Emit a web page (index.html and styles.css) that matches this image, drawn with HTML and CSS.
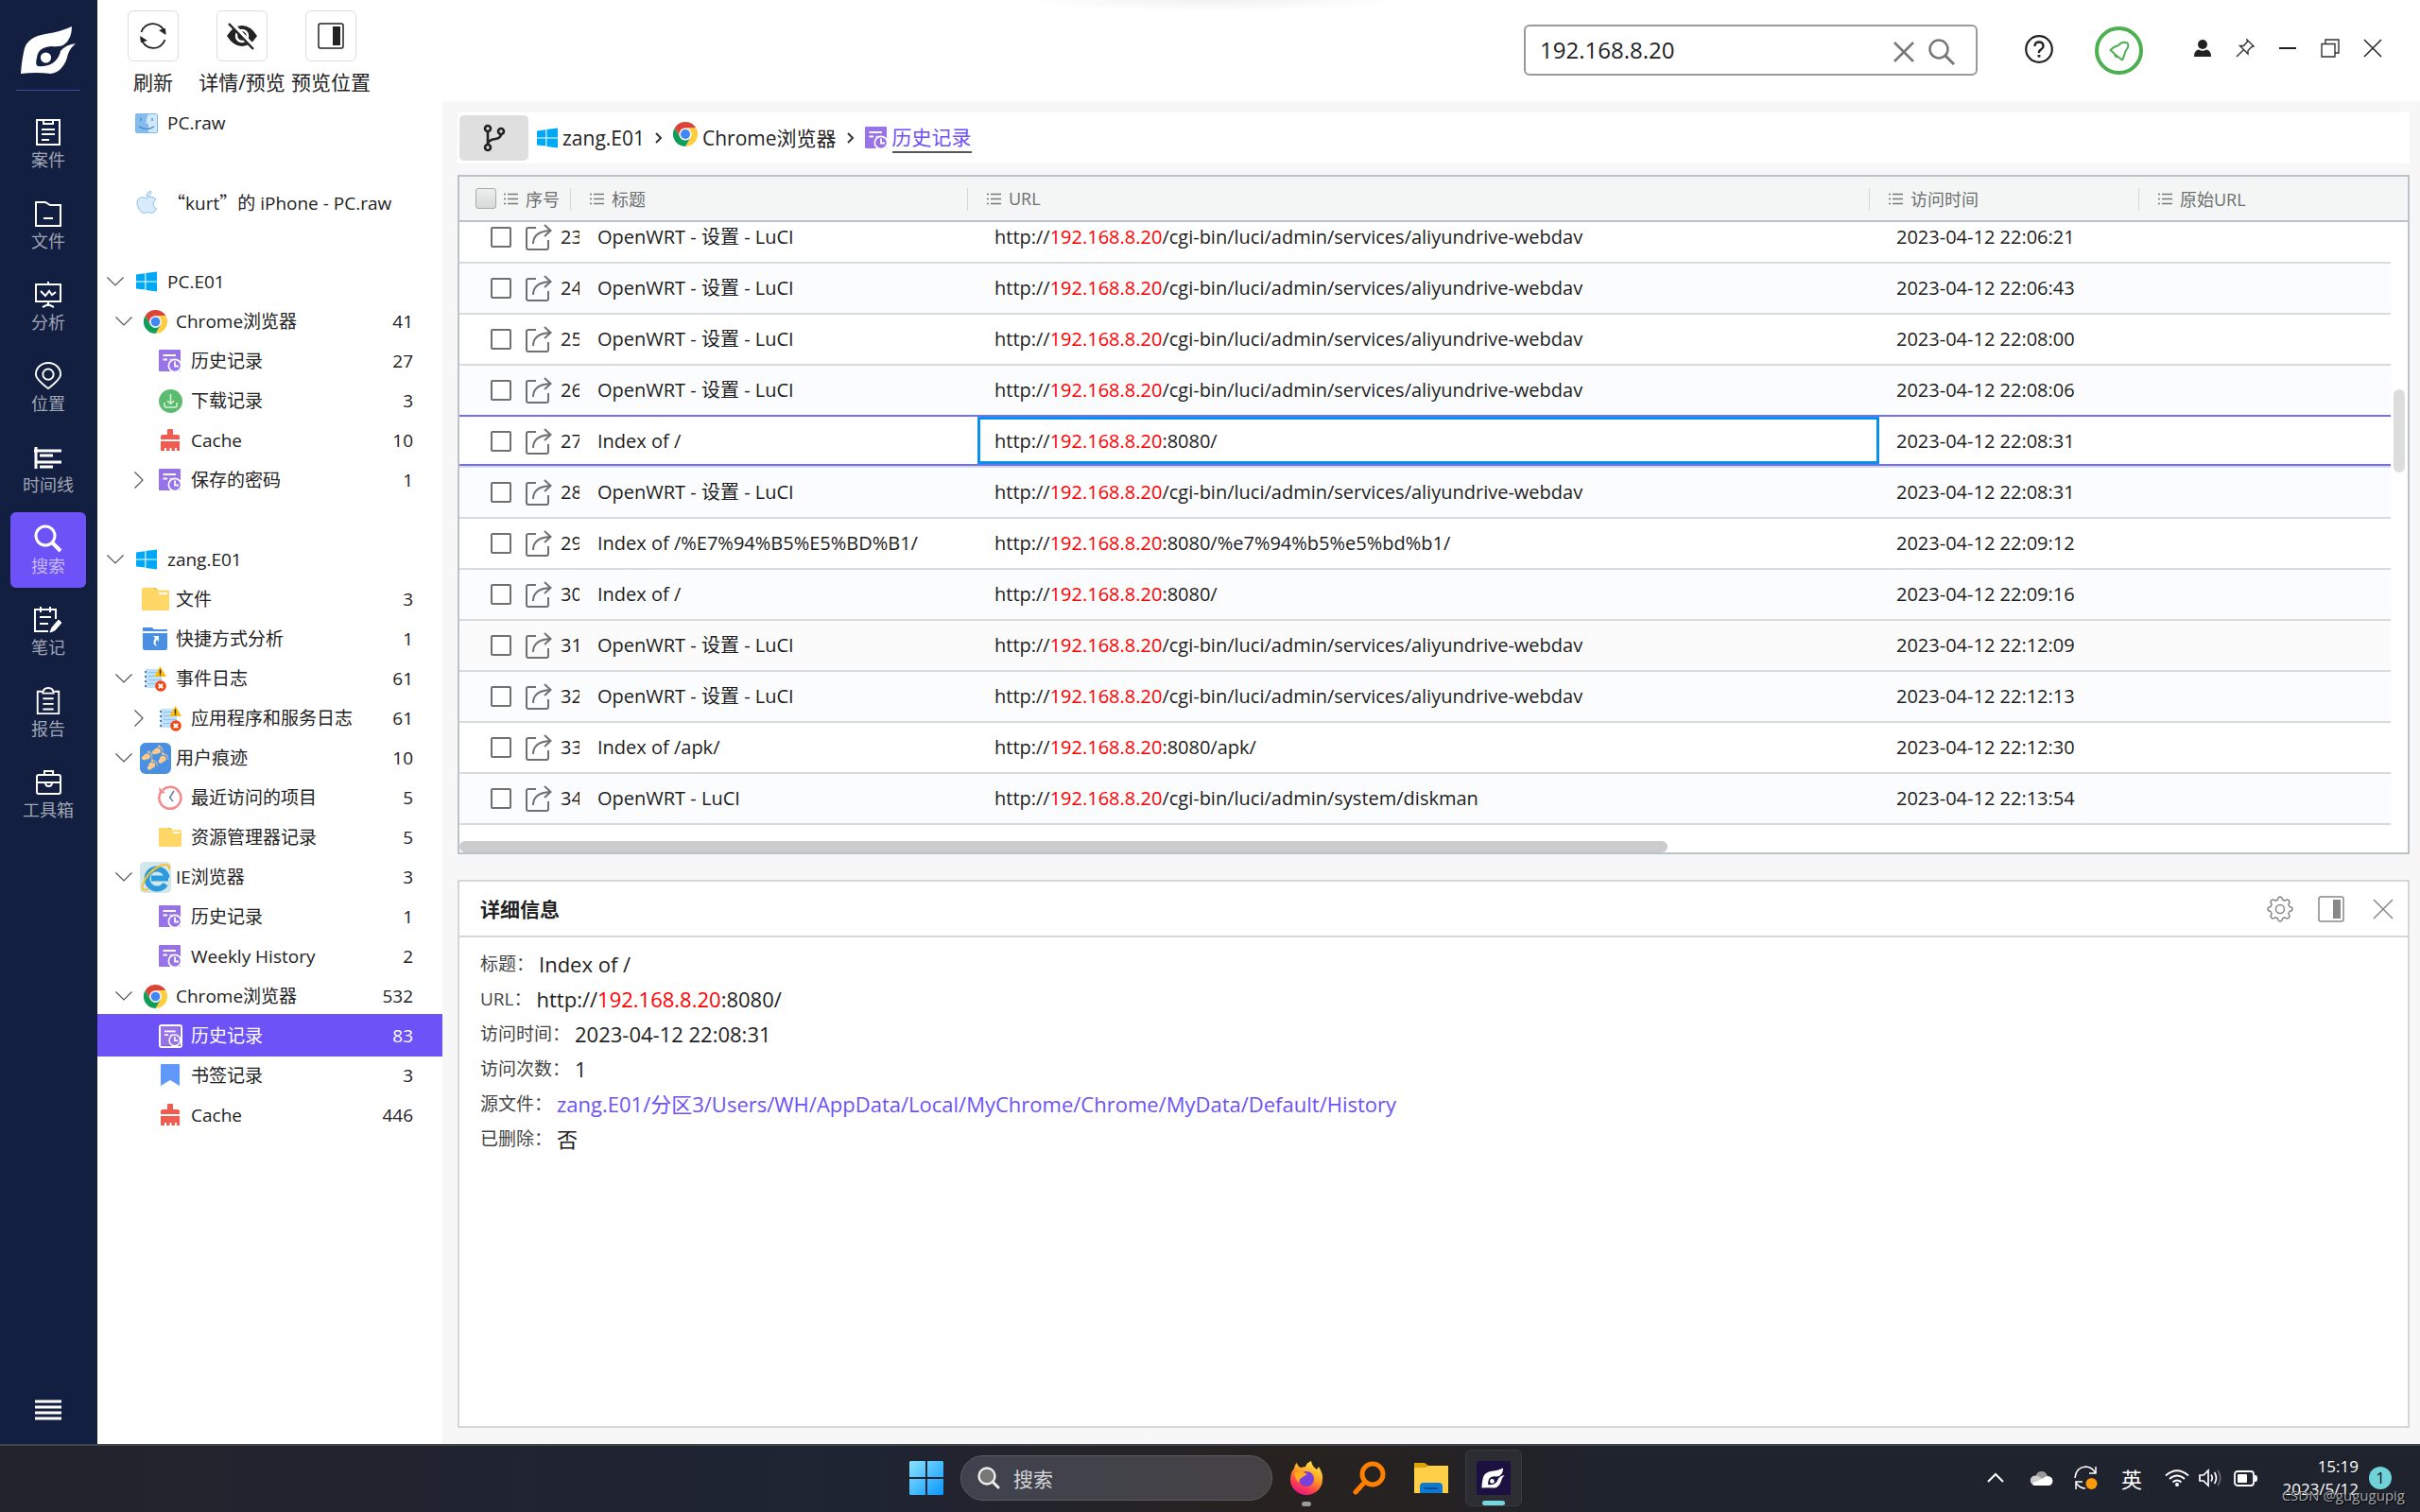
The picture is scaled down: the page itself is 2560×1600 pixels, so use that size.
FILE: index.html
```html
<!DOCTYPE html>
<html lang="zh-CN">
<head>
<meta charset="utf-8">
<title>搜索 - 历史记录</title>
<link rel="stylesheet" href="styles.css">
</head>
<body>
<svg class="sprite" aria-hidden="true">
  <symbol id="chrome" viewBox="0 0 48 48">
    <path fill="#db4437" d="M3.2 12A24 24 0 0 1 44.8 12H24A12 12 0 0 0 13.6 30Z"/>
    <path fill="#ffcd40" d="M24 12H44.8A24 24 0 0 1 24 48L34.4 30A12 12 0 0 0 24 12Z"/>
    <path fill="#0f9d58" d="M34.4 30L24 48A24 24 0 0 1 3.2 12L13.6 30A12 12 0 0 0 34.4 30Z"/>
    <circle cx="24" cy="24" r="11.5" fill="#f1f1f1"/><circle cx="24" cy="24" r="9.2" fill="#4285f4"/>
  </symbol>
  <symbol id="windows" viewBox="0 0 22 22">
    <path fill="#00a8f8" d="M0 3.6L9.3 2.2V10.4H0ZM10.4 2L22 .4V10.4H10.4ZM0 11.6H9.3V19.6L0 18.4ZM10.4 11.6H22V21.6L10.4 19.9Z"/>
  </symbol>
  <symbol id="history" viewBox="0 0 24 24">
    <rect width="23" height="23" rx="1" fill="#9873e8"/>
    <path stroke="#fff" stroke-width="2" fill="none" d="M4.500 6H18M4.500 10.500H9"/>
    <path stroke="#d9cbf7" stroke-width="1.500" fill="none" d="M11 10.500H15"/>
    <circle cx="17" cy="17" r="7.500" fill="#fff"/><circle cx="17" cy="17" r="5.800" fill="#9873e8"/>
    <path stroke="#fff" stroke-width="1.800" fill="none" d="M17 12.500V17.500H21"/>
  </symbol>
  <symbol id="cache" viewBox="0 0 20 24">
    <path fill="#f25b50" d="M7 1Q7 0 8 0H12Q13 0 13 1V6H18Q20 6 20 8V11H0V8Q0 6 2 6H7ZM0 13H20V23H17V20H15V23H11.500V20H9.500V23H6V20H4V23H0Z"/>
  </symbol>
  <symbol id="folder" viewBox="0 0 29 24">
    <path fill="#f9b750" d="M10 0H15L18 4H12Z"/><path fill="#ffd766" d="M0 1Q0 0 1 0H11L15 2.500H28Q29 2.500 29 3.500V23Q29 24 28 24H1Q0 24 0 23Z"/>
    <path fill="#fff" d="M18 5H27V7H18Z"/>
  </symbol>
  <symbol id="eventlog" viewBox="0 0 24 27">
    <rect x="2" y="3" width="17" height="20" fill="#bfe0fb"/>
    <path stroke="#8fc4ef" stroke-width="1" d="M5 6.500H19M5 10.500H19M5 14.500H19M5 18.500H19"/>
    <path stroke="#4c7aa5" stroke-width="2" stroke-dasharray="2 3" d="M2 5V23"/>
    <path fill="#fdbd10" d="M17.500 0L24 11H11Z"/><path fill="#222" d="M16.800 3.500H18.200V8H16.800ZM16.800 8.700H18.200V10H16.800Z"/>
    <circle cx="18" cy="21" r="5.800" fill="#f4430f"/><path stroke="#fff" stroke-width="2" d="M15.700 18.700L20.300 23.300M20.300 18.700L15.700 23.300"/>
  </symbol>
  <symbol id="foot" viewBox="0 0 12 15">
    <path fill="#fccb8a" d="M3 5Q7 3 8.500 6Q9.500 9 7.500 10.500Q7 14.500 4.500 15Q1.500 15 2 11Q0 7 3 5Z"/>
    <g fill="#fccb8a"><circle cx="2" cy="3" r="1.500"/><circle cx="4.800" cy="2" r="1"/><circle cx="7" cy="2.200" r=".9"/><circle cx="9" cy="3.200" r=".8"/><circle cx="10.400" cy="4.800" r=".7"/></g>
  </symbol>
  <symbol id="down" viewBox="0 0 18 10"><path fill="none" stroke="#555" stroke-width="1.200" d="M.5 .5L9 9L17.500 .5"/></symbol>
  <symbol id="right" viewBox="0 0 10 18"><path fill="none" stroke="#555" stroke-width="1.200" d="M.5 .5L9 9L.5 17.500"/></symbol>
  <symbol id="list" viewBox="0 0 15 13"><path fill="none" stroke="#777" stroke-width="1.500" d="M0 1.500H2M4 1.500H15M0 6.500H2M4 6.500H15M0 11.500H2M4 11.500H15"/></symbol>
  <symbol id="share" viewBox="0 0 28 28">
    <path fill="none" stroke="#707070" stroke-width="2" d="M11 4H3Q1 4 1 6V25Q1 27 3 27H22Q24 27 24 25V17M8 21Q8 8 26 7M20 1L26.500 7L20 13"/>
  </symbol>
  <symbol id="logo" viewBox="0 0 58 52">
    <path fill="#fff" d="M0 51Q1 36 4 24Q8 12 26 9Q44 6 54 1Q54 14 46 20Q42 23 32 22Q18 23 17 34Q15 42 18 43Q30 44 36 38Q41 33 42 27Q48 20 58 19Q50 26 49 34Q44 49 32 51Q16 49 0 51Z"/>
    <circle cx="26.500" cy="34" r="5.600" fill="#fff"/>
  </symbol>
  <symbol id="panel" viewBox="0 0 28 28">
    <rect x="1" y="1" width="26" height="26" rx="2" fill="none" stroke="currentColor" stroke-width="1.500"/><rect x="16" y="4" width="8" height="20" fill="currentColor"/>
  </symbol>
</svg>

<div class="app">
  <nav class="rail">
    <svg class="brand" width="58" height="52"><use href="#logo"/></svg>
    <div class="rail-list">
      <button class="rail-item"><svg width="30" height="30" viewBox="0 0 30 30"><path d="M3 2H27V28H3ZM10 2V6H20V2M8 12H22M8 17H22M8 23H16"/></svg>案件</button>
      <button class="rail-item"><svg width="30" height="30" viewBox="0 0 30 30"><path d="M2 3H12L17 6H28V28H2ZM10 20H20"/></svg>文件</button>
      <button class="rail-item"><svg width="30" height="30" viewBox="0 0 30 30"><path d="M2 4H28V22H2ZM15 1V4M15 22V27M9 28L15 25L21 28M7 11L12 16L16 11L19 15L23 12"/></svg>分析</button>
      <button class="rail-item"><svg width="30" height="32" viewBox="0 0 30 32"><path d="M15 30Q1 19 1 14A14 13 0 0 1 29 14Q29 19 15 30Z"/><circle cx="15" cy="14" r="6"/></svg>位置</button>
      <button class="rail-item"><svg width="30" height="30" viewBox="0 0 30 30"><path d="M2 4V27M0 8H29M6 13H20M2 20H29M6 25H20" stroke-width="3"/></svg>时间线</button>
      <button class="rail-item active"><svg width="30" height="30" viewBox="0 0 30 30"><circle cx="12" cy="12" r="10" stroke-width="3"/><path d="M19 19L28 28" stroke-width="4"/></svg>搜索</button>
      <button class="rail-item"><svg width="30" height="30" viewBox="0 0 30 30"><path d="M15 27H1V4H23V14M7 1V7M17 1V7M6 12H18M6 19H15"/><path d="M17 28L19 23L26 15L29 18L22 26Z" fill="#fff" stroke-width="1"/></svg>笔记</button>
      <button class="rail-item"><svg width="30" height="32" viewBox="0 0 30 32"><path d="M8 5H3V30H27V5H22M9 7Q9 1 15 1T21 7ZM9 13H21M9 19H21M9 25H21"/></svg>报告</button>
      <button class="rail-item"><svg width="30" height="30" viewBox="0 0 30 30"><rect x="3" y="7" width="25" height="20" rx="2"/><path d="M11 7V3H20V7M3 15H28M12 15Q12 19 15.500 19T19 15"/></svg>工具箱</button>
    </div>
    <button class="rail-menu" aria-label="菜单"><svg width="28" height="22" viewBox="0 0 28 22"><path d="M0 2H28M0 8H28M0 14H28M0 20H28" stroke-width="3"/></svg></button>
  </nav>

  <div class="workspace">
    <header class="topbar">
      <div class="tools">
        <button class="tool"><span class="tool-box"><svg width="30" height="30" viewBox="0 0 30 30"><path fill="none" stroke="#222" stroke-width="1.800" d="M2.500 11A13 13 0 0 1 27.500 12M27.500 19A13 13 0 0 1 2.500 18"/><path fill="#222" d="M21 9L28.500 14L28 7ZM9 20L1 15L2 22Z"/></svg></span>刷新</button>
        <button class="tool wide"><span class="tool-box"><svg width="34" height="30" viewBox="0 0 34 30"><path fill="#222" d="M1 15Q8 4 17 4T33 15Q26 26 17 26T1 15Z"/><circle cx="17" cy="15" r="6" fill="none" stroke="#fff" stroke-width="2.500"/><path stroke="#fff" stroke-width="5" d="M5 1L31 29"/><path stroke="#222" stroke-width="2.500" d="M3 2L29 29"/></svg></span>详情/预览</button>
        <button class="tool"><span class="tool-box"><svg class="dark" width="28" height="28"><use href="#panel"/></svg></span>预览位置</button>
      </div>
      <form class="search">
        <input type="text" value="192.168.8.20" aria-label="搜索">
        <button type="button" aria-label="清除"><svg width="24" height="24" viewBox="0 0 24 24"><path d="M2 2L22 22M22 2L2 22" stroke="#777" stroke-width="2.500"/></svg></button>
        <button type="button" aria-label="查找"><svg width="28" height="28" viewBox="0 0 28 28"><circle cx="11" cy="11" r="9.500" fill="none" stroke="#777" stroke-width="2.500"/><path d="M18 18L27 27" stroke="#777" stroke-width="3"/></svg></button>
      </form>
      <button class="help" aria-label="帮助"><svg width="30" height="30" viewBox="0 0 30 30"><circle cx="15" cy="15" r="13.800" fill="none" stroke="#222" stroke-width="2.200"/><path fill="none" stroke="#222" stroke-width="2.400" d="M10.500 12Q10.500 7.500 15 7.500T19.500 12Q19.500 14 17 15.500T15 19"/><path fill="#222" d="M13.600 21H16.400V23.600H13.600Z"/></svg></button>
      <button class="notice" aria-label="通知"><svg width="22" height="22" viewBox="0 0 22 22"><path fill="none" stroke="#4caf50" stroke-width="2" stroke-linejoin="round" d="M1.500 10L5 7L10 5Q13 1 18 2Q21 2 20 7Q17 11 16 16L14 20.500L8 16Z"/><path fill="#4caf50" d="M5 14L10 17Q6 20 5 14Z"/></svg></button>
      <div class="window-controls">
        <button aria-label="用户"><svg width="20" height="20" viewBox="0 0 20 20"><circle cx="10" cy="6" r="5" fill="#222"/><path fill="#222" d="M1 19Q1 12 6 11.500Q10 14 14 11.500Q19 12 19 19Z"/></svg></button>
        <button aria-label="置顶"><svg width="20" height="20" viewBox="0 0 20 20"><path fill="none" stroke="#333" stroke-width="1.400" d="M12 1L19 8L17 8.500L13 12.500V16L4.500 7.500H8.500L12.500 3ZM8 12L1 19"/></svg></button>
        <button aria-label="最小化"><svg width="20" height="20" viewBox="0 0 20 20"><path stroke="#222" stroke-width="2" d="M1 10H19"/></svg></button>
        <button aria-label="还原"><svg width="20" height="20" viewBox="0 0 20 20"><path fill="none" stroke="#333" stroke-width="1.400" d="M1 5.500H15V19H1ZM5 5V1H19V15H15"/></svg></button>
        <button aria-label="关闭"><svg width="20" height="20" viewBox="0 0 20 20"><path stroke="#222" stroke-width="1.500" d="M1 1L19 19M19 1L1 19"/></svg></button>
      </div>
    </header>

    <div class="content">
      <aside class="tree">
        <div class="node l0"><i class="tw"></i><i class="ic"><svg width="24" height="21" viewBox="0 0 24 21"><rect x=".5" y=".5" width="23" height="20" rx="1" fill="#cfe8fc" stroke="#7db8ea"/><path fill="#85bcee" d="M1 1H14Q11 6 12 11H14V20H1Z"/><path fill="none" stroke="#3f83c4" stroke-width="1.200" d="M6 5V8M18 5V8M4 14Q12 19 20 14"/></svg></i><span>PC.raw</span></div>
        <div class="node"></div>
        <div class="node l0"><i class="tw"></i><i class="ic"><svg width="22" height="24" viewBox="0 0 22 24"><path fill="#d8ecfd" stroke="#93c0ea" d="M11 8Q14 5.500 17 6.500Q20 7 21 9Q17 12 18 15Q19 18 21.500 18.500Q19 24 16 23.500Q13 21.500 9 23.500Q6 24 3.500 20Q-.5 14 1.500 9.500Q5 5 11 8ZM11 6Q11 1 16 .5Q16 5 11 6Z"/></svg></i><span><span class="full">“</span>kurt<span class="full">”</span>的 iPhone - PC.raw</span></div>
        <div class="node"></div>
        <div class="node l0"><i class="tw"><svg width="18" height="10"><use href="#down"/></svg></i><i class="ic"><svg width="22" height="22"><use href="#windows"/></svg></i><span>PC.E01</span></div>
        <div class="node l1"><i class="tw"><svg width="18" height="10"><use href="#down"/></svg></i><i class="ic"><svg width="25" height="25"><use href="#chrome"/></svg></i><span>Chrome浏览器</span><b>41</b></div>
        <div class="node l2"><i class="tw"></i><i class="ic"><svg width="24" height="24"><use href="#history"/></svg></i><span>历史记录</span><b>27</b></div>
        <div class="node l2"><i class="tw"></i><i class="ic"><svg width="25" height="25" viewBox="0 0 25 25"><circle cx="12.500" cy="12.500" r="12.500" fill="#5dbb70"/><path fill="none" stroke="#d8f2dc" stroke-width="1.500" d="M12.500 5V15M9 12L12.500 15.500L16 12M6 14V17Q6 19 8 19H17Q19 19 19 17V14"/></svg></i><span>下载记录</span><b>3</b></div>
        <div class="node l2"><i class="tw"></i><i class="ic"><svg width="20" height="24"><use href="#cache"/></svg></i><span>Cache</span><b>10</b></div>
        <div class="node l2"><i class="tw"><svg width="10" height="18"><use href="#right"/></svg></i><i class="ic"><svg width="24" height="24"><use href="#history"/></svg></i><span>保存的密码</span><b>1</b></div>
        <div class="node"></div>
        <div class="node l0"><i class="tw"><svg width="18" height="10"><use href="#down"/></svg></i><i class="ic"><svg width="22" height="22"><use href="#windows"/></svg></i><span>zang.E01</span></div>
        <div class="node l1"><i class="tw"></i><i class="ic"><svg width="29" height="24"><use href="#folder"/></svg></i><span>文件</span><b>3</b></div>
        <div class="node l1"><i class="tw"></i><i class="ic"><svg width="26" height="24" viewBox="0 0 26 24"><path fill="#4a90e2" d="M0 0H10L12 2H26V4H0ZM0 6H26V22Q26 24 24 24H2Q0 24 0 22Z"/><path fill="#fff" d="M11 9H17V15L15 13Q12 16 15 20Q9 18 13 11Z"/></svg></i><span>快捷方式分析</span><b>1</b></div>
        <div class="node l1"><i class="tw"><svg width="18" height="10"><use href="#down"/></svg></i><i class="ic"><svg width="24" height="27"><use href="#eventlog"/></svg></i><span>事件日志</span><b>61</b></div>
        <div class="node l2"><i class="tw"><svg width="10" height="18"><use href="#right"/></svg></i><i class="ic"><svg width="24" height="27"><use href="#eventlog"/></svg></i><span>应用程序和服务日志</span><b>61</b></div>
        <div class="node l1"><i class="tw"><svg width="18" height="10"><use href="#down"/></svg></i><i class="ic"><svg width="33" height="33" viewBox="0 0 33 33"><rect width="33" height="33" rx="6" fill="#4a90e2"/><g transform="translate(9 15) rotate(55)"><use href="#foot" x="-6" y="-6" width="11" height="13"/></g><g transform="translate(20 9) rotate(55)"><use href="#foot" x="-6" y="-6" width="11" height="13"/></g><g transform="translate(24 18) rotate(35)"><use href="#foot" x="-5" y="-8" width="11" height="13"/></g><g transform="translate(13 24) rotate(35)"><use href="#foot" x="-5" y="-7" width="11" height="13"/></g></svg></i><span>用户痕迹</span><b>10</b></div>
        <div class="node l2"><i class="tw"></i><i class="ic"><svg width="26" height="26" viewBox="0 0 26 26"><path fill="none" stroke="#f28b8b" stroke-width="2.600" d="M4 6A11.500 11.500 0 1 0 13 1.800Q9 1.800 5 5"/><path fill="#f28b8b" d="M1 2L2 9L8 8Z"/><path fill="none" stroke="#5b7a99" stroke-width="1.400" d="M17 6L12.500 13L16 17"/></svg></i><span>最近访问的项目</span><b>5</b></div>
        <div class="node l2"><i class="tw"></i><i class="ic"><svg width="24" height="20"><use href="#folder"/></svg></i><span>资源管理器记录</span><b>5</b></div>
        <div class="node l1"><i class="tw"><svg width="18" height="10"><use href="#down"/></svg></i><i class="ic"><svg width="33" height="33" viewBox="0 0 33 33"><rect width="33" height="33" rx="5" fill="#d3e6e8"/><path fill="none" stroke="#2b9be0" stroke-width="6" d="M30 17.500H12M28.500 17A10.500 10.500 0 1 0 27 23.500"/><path fill="none" stroke="#f7c331" stroke-width="2" d="M31 8Q32 1 22 4Q8 10 3 24Q1 32 9 29"/></svg></i><span>IE浏览器</span><b>3</b></div>
        <div class="node l2"><i class="tw"></i><i class="ic"><svg width="24" height="24"><use href="#history"/></svg></i><span>历史记录</span><b>1</b></div>
        <div class="node l2"><i class="tw"></i><i class="ic"><svg width="24" height="24"><use href="#history"/></svg></i><span>Weekly History</span><b>2</b></div>
        <div class="node l1"><i class="tw"><svg width="18" height="10"><use href="#down"/></svg></i><i class="ic"><svg width="25" height="25"><use href="#chrome"/></svg></i><span>Chrome浏览器</span><b>532</b></div>
        <div class="node l2 selected"><i class="tw"></i><i class="ic"><svg class="framed" width="25" height="25"><use href="#history"/></svg></i><span>历史记录</span><b>83</b></div>
        <div class="node l2"><i class="tw"></i><i class="ic"><svg width="20" height="24" viewBox="0 0 20 24"><path fill="#6198fb" d="M0 1Q0 0 1 0H19Q20 0 20 1V23L10 17L0 23Z"/></svg></i><span>书签记录</span><b>3</b></div>
        <div class="node l2"><i class="tw"></i><i class="ic"><svg width="20" height="24"><use href="#cache"/></svg></i><span>Cache</span><b>446</b></div>
      </aside>

      <main class="main">
        <div class="crumbs">
          <button class="branch" aria-label="路径"><svg width="26" height="30" viewBox="0 0 26 30"><g fill="none" stroke="#222" stroke-width="2.600"><circle cx="6" cy="5" r="3"/><circle cx="6" cy="25" r="3"/><circle cx="20" cy="8" r="3"/><path d="M6 8V22M20 11Q20 15 14 16Q7 17 6 21"/></g></svg></button>
          <a href="#"><svg width="22" height="22"><use href="#windows"/></svg>zang.E01</a>
          <svg class="sep" width="8" height="12" viewBox="0 0 8 12"><path d="M1 1L6 6L1 11"/></svg>
          <a href="#"><svg class="lift" width="26" height="26"><use href="#chrome"/></svg>Chrome浏览器</a>
          <svg class="sep" width="8" height="12" viewBox="0 0 8 12"><path d="M1 1L6 6L1 11"/></svg>
          <a href="#" class="current"><svg width="24" height="24"><use href="#history"/></svg><span>历史记录</span></a>
        </div>

        <div class="grid">
          <table>
            <colgroup><col class="c-no"><col class="c-title"><col class="c-url"><col class="c-time"><col></colgroup>
            <thead><tr>
              <th><div class="head"><input type="checkbox" aria-label="全选"><svg width="15" height="13"><use href="#list"/></svg>序号</div></th>
              <th><div class="head"><svg width="15" height="13"><use href="#list"/></svg>标题</div></th>
              <th><div class="head"><svg width="15" height="13"><use href="#list"/></svg>URL</div></th>
              <th><div class="head"><svg width="15" height="13"><use href="#list"/></svg>访问时间</div></th>
              <th><div class="head"><svg width="15" height="13"><use href="#list"/></svg>原始URL</div></th>
            </tr></thead>
            <tbody>
              <tr class="partial"><td><div class="num"><input type="checkbox" aria-label="选择 23"><svg width="28" height="28"><use href="#share"/></svg><span>23</span></div></td><td>OpenWRT - 设置 - LuCI</td><td>http://<mark>192.168.8.20</mark>/cgi-bin/luci/admin/services/aliyundrive-webdav</td><td>2023-04-12 22:06:21</td><td></td></tr>
              <tr><td><div class="num"><input type="checkbox" aria-label="选择 24"><svg width="28" height="28"><use href="#share"/></svg><span>24</span></div></td><td>OpenWRT - 设置 - LuCI</td><td>http://<mark>192.168.8.20</mark>/cgi-bin/luci/admin/services/aliyundrive-webdav</td><td>2023-04-12 22:06:43</td><td></td></tr>
              <tr><td><div class="num"><input type="checkbox" aria-label="选择 25"><svg width="28" height="28"><use href="#share"/></svg><span>25</span></div></td><td>OpenWRT - 设置 - LuCI</td><td>http://<mark>192.168.8.20</mark>/cgi-bin/luci/admin/services/aliyundrive-webdav</td><td>2023-04-12 22:08:00</td><td></td></tr>
              <tr class="before"><td><div class="num"><input type="checkbox" aria-label="选择 26"><svg width="28" height="28"><use href="#share"/></svg><span>26</span></div></td><td>OpenWRT - 设置 - LuCI</td><td>http://<mark>192.168.8.20</mark>/cgi-bin/luci/admin/services/aliyundrive-webdav</td><td>2023-04-12 22:08:06</td><td></td></tr>
              <tr class="picked"><td><div class="num"><input type="checkbox" aria-label="选择 27"><svg width="28" height="28"><use href="#share"/></svg><span>27</span></div></td><td>Index of /</td><td class="focus"><div>http://<mark>192.168.8.20</mark>:8080/</div></td><td>2023-04-12 22:08:31</td><td></td></tr>
              <tr><td><div class="num"><input type="checkbox" aria-label="选择 28"><svg width="28" height="28"><use href="#share"/></svg><span>28</span></div></td><td>OpenWRT - 设置 - LuCI</td><td>http://<mark>192.168.8.20</mark>/cgi-bin/luci/admin/services/aliyundrive-webdav</td><td>2023-04-12 22:08:31</td><td></td></tr>
              <tr><td><div class="num"><input type="checkbox" aria-label="选择 29"><svg width="28" height="28"><use href="#share"/></svg><span>29</span></div></td><td>Index of /%E7%94%B5%E5%BD%B1/</td><td>http://<mark>192.168.8.20</mark>:8080/%e7%94%b5%e5%bd%b1/</td><td>2023-04-12 22:09:12</td><td></td></tr>
              <tr><td><div class="num"><input type="checkbox" aria-label="选择 30"><svg width="28" height="28"><use href="#share"/></svg><span>30</span></div></td><td>Index of /</td><td>http://<mark>192.168.8.20</mark>:8080/</td><td>2023-04-12 22:09:16</td><td></td></tr>
              <tr class="hover"><td><div class="num"><input type="checkbox" aria-label="选择 31"><svg width="28" height="28"><use href="#share"/></svg><span>31</span></div></td><td>OpenWRT - 设置 - LuCI</td><td>http://<mark>192.168.8.20</mark>/cgi-bin/luci/admin/services/aliyundrive-webdav</td><td>2023-04-12 22:12:09</td><td></td></tr>
              <tr><td><div class="num"><input type="checkbox" aria-label="选择 32"><svg width="28" height="28"><use href="#share"/></svg><span>32</span></div></td><td>OpenWRT - 设置 - LuCI</td><td>http://<mark>192.168.8.20</mark>/cgi-bin/luci/admin/services/aliyundrive-webdav</td><td>2023-04-12 22:12:13</td><td></td></tr>
              <tr><td><div class="num"><input type="checkbox" aria-label="选择 33"><svg width="28" height="28"><use href="#share"/></svg><span>33</span></div></td><td>Index of /apk/</td><td>http://<mark>192.168.8.20</mark>:8080/apk/</td><td>2023-04-12 22:12:30</td><td></td></tr>
              <tr><td><div class="num"><input type="checkbox" aria-label="选择 34"><svg width="28" height="28"><use href="#share"/></svg><span>34</span></div></td><td>OpenWRT - LuCI</td><td>http://<mark>192.168.8.20</mark>/cgi-bin/luci/admin/system/diskman</td><td>2023-04-12 22:13:54</td><td></td></tr>
            </tbody>
          </table>
          <div class="scroll-h"></div>
          <div class="scroll-v"></div>
        </div>

        <section class="detail">
          <header class="detail-head">
            <h2>详细信息</h2>
            <button aria-label="设置"><svg width="28" height="28" viewBox="0 0 28 28"><path fill="none" stroke="#888" stroke-width="1.500" stroke-linejoin="round" d="M11.500 4Q12 1 14 1T16.500 4L19 5.200Q21.500 3 23.200 4.800T22.800 9L24 11.500Q27 12 27 14T24 16.500L22.800 19Q25 21.500 23.200 23.200T19 22.800L16.500 24Q16 27 14 27T11.500 24L9 22.800Q6.500 25 4.800 23.200T5.200 19L4 16.500Q1 16 1 14T4 11.500L5.200 9Q3 6.500 4.800 4.800T9 5.200Z"/><circle cx="14" cy="14" r="4.500" fill="none" stroke="#888" stroke-width="1.500"/></svg></button>
            <button aria-label="预览位置"><svg width="28" height="28"><use href="#panel"/></svg></button>
            <button aria-label="关闭"><svg width="22" height="22" viewBox="0 0 22 22"><path stroke="#888" stroke-width="1.500" d="M1 1L21 21M21 1L1 21"/></svg></button>
          </header>
          <dl>
            <div><dt>标题：</dt><dd>Index of /</dd></div>
            <div><dt>URL：</dt><dd>http://<mark>192.168.8.20</mark>:8080/</dd></div>
            <div><dt>访问时间：</dt><dd>2023-04-12 22:08:31</dd></div>
            <div><dt>访问次数：</dt><dd>1</dd></div>
            <div><dt>源文件：</dt><dd><a href="#">zang.E01/分区3/Users/WH/AppData/Local/MyChrome/Chrome/MyData/Default/History</a></dd></div>
            <div><dt>已删除：</dt><dd>否</dd></div>
          </dl>
        </section>
      </main>
    </div>
  </div>
</div>

<footer class="taskbar">
  <div class="apps">
    <button class="app-btn" aria-label="开始"><svg width="36" height="36" viewBox="0 0 36 36"><defs><linearGradient id="win" x1="0" y1="0" x2="1" y2="1"><stop offset="0" stop-color="#8be4ff"/><stop offset="1" stop-color="#0a96ff"/></linearGradient></defs><path fill="url(#win)" d="M1 0H17V17H0V1ZM19 0H35L36 1V17H19ZM0 19H17V36H1L0 35ZM19 19H36V35L35 36H19Z"/></svg></button>
    <button class="task-search"><svg width="24" height="24" viewBox="0 0 24 24"><circle cx="10" cy="10" r="8.500" fill="#777" stroke="#eee" stroke-width="2.400"/><path stroke="#eee" stroke-width="3" stroke-linecap="round" d="M16.500 16.500L22 22"/></svg>搜索</button>
    <button class="app-btn running" aria-label="Firefox"><svg width="36" height="36" viewBox="0 0 36 36"><defs><linearGradient id="fox" x1=".8" y1="0" x2=".3" y2="1"><stop offset="0" stop-color="#fff44f"/><stop offset=".45" stop-color="#ff9a1f"/><stop offset=".75" stop-color="#ff3f4e"/><stop offset="1" stop-color="#e31587"/></linearGradient></defs><path fill="url(#fox)" d="M5 8Q6 3 8 2Q9 6 12 7L17 6Q18 2 23 0Q24 6 29 9L31 6Q36 14 35 20A17 16 0 0 1 1 20Q1 12 5 8Z"/><circle cx="18" cy="19" r="8" fill="#7b3fe0"/><path fill="#ffad20" d="M5 13Q12 9 19 14L14 17Q10 19 10 23Q6 19 5 13Z"/></svg></button>
    <button class="app-btn" aria-label="Everything"><svg width="36" height="36" viewBox="0 0 36 36"><circle cx="22" cy="14" r="11" fill="none" stroke="#ff7f00" stroke-width="5"/><path stroke="#ff7f00" stroke-width="5" stroke-linecap="round" d="M13 23L4 33"/></svg></button>
    <button class="app-btn" aria-label="文件资源管理器"><svg width="36" height="34" viewBox="0 0 36 34"><path fill="#e0a108" d="M0 1H11L15 4V8H0Z"/><path fill="#ffcf48" d="M0 6H12L15 4H36V33H0Z"/><path fill="#0f78d0" d="M6 33V26Q6 22 10 22H26Q30 22 30 26V33Z"/><path stroke="#0a4f96" stroke-width="2" d="M11 28H25"/></svg></button>
    <button class="app-btn current" aria-label="取证分析"><svg width="36" height="36" viewBox="0 0 36 36"><rect width="36" height="36" rx="2" fill="#1b1040"/><svg x="5" y="7" width="25" height="22" viewBox="0 0 58 52"><use href="#logo"/></svg></svg></button>
  </div>
  <div class="tray">
    <button aria-label="显示隐藏的图标"><svg width="18" height="12" viewBox="0 0 18 12"><path fill="none" stroke="#fff" stroke-width="2" d="M1 10L9 2L17 10"/></svg></button>
    <button aria-label="OneDrive"><svg width="25" height="17" viewBox="0 0 25 17"><path fill="#999" d="M6 7Q8 0 13 1Q17 1 19 6L12 12Z"/><path fill="#ccc" d="M5 16Q0 14 1 9Q3 4 9 6L20 13Z"/><path fill="#fff" d="M5 16Q2 15 4 13L13 9L18 6Q24 6 24.500 11Q24 16 20 16Z"/></svg></button>
    <button aria-label="更新"><svg width="26" height="26" viewBox="0 0 26 26"><path fill="none" stroke="#fff" stroke-width="1.500" d="M1 13Q2 2 12 1Q19 1 23 8M23 1V8H16M12 24Q6 24 2 18M2 25V17H9"/><circle cx="18.500" cy="19" r="6" fill="#ff9a08"/></svg></button>
    <button class="ime">英</button>
    <button class="sys" aria-label="网络"><svg width="26" height="18" viewBox="0 0 26 18"><path fill="none" stroke="#fff" stroke-width="1.800" d="M1 6.500Q13 -4 25 6.500M5 10Q13 3 21 10M8.500 13.500Q13 9.500 17.500 13.500"/><circle cx="13" cy="16" r="2" fill="#fff"/></svg></button>
    <button class="sys" aria-label="音量"><svg width="26" height="20" viewBox="0 0 26 20"><path fill="none" stroke="#fff" stroke-width="1.700" d="M1 7H5L10 2V18L5 13H1ZM13 6.500Q15.500 10 13 13.500M16.500 4Q20.500 10 16.500 16"/><path fill="none" stroke="#666b75" stroke-width="1.700" d="M20 2Q25.500 10 20 18"/></svg></button>
    <button class="sys" aria-label="电池"><svg width="25" height="17" viewBox="0 0 25 17"><rect x="1" y="1" width="20" height="15" rx="3" fill="none" stroke="#fff" stroke-width="1.800"/><rect x="4" y="4" width="10" height="9" rx="1" fill="#fff"/><path fill="#fff" d="M22 5H23Q25 5 25 8.500T23 12H22Z"/></svg></button>
    <div class="clock"><time>15:19</time><time>2023/5/12</time></div>
    <span class="badge">1</span>
  </div>
  <span class="watermark">CSDN @gugugupig</span>
</footer>
</body>
</html>
```
FILE: styles.css
```css
* { box-sizing: border-box; }

body {
  margin: 0;
  height: 100vh;
  display: flex;
  flex-direction: column;
  overflow: hidden;
  background: #fff;
  color: #222;
  font-family: "Open Sans", "Noto Sans CJK SC", sans-serif;
  font-size: 20px;
}

button {
  margin: 0;
  padding: 0;
  border: 0;
  background: none;
  color: inherit;
  font: inherit;
}

svg { display: block; flex: none; }
a { color: inherit; text-decoration: none; }
mark { background: none; color: #f00; }
.sprite { position: absolute; width: 0; height: 0; }

.app {
  flex: 1;
  min-height: 0;
  display: flex;
}

/* navigation rail */
.rail {
  width: 103px;
  flex: none;
  display: flex;
  flex-direction: column;
  align-items: center;
  padding: 27px 1px 25px 0;
  background: #121f41;
}

.rail svg { fill: none; stroke: #fff; stroke-width: 2; }
.rail .brand { stroke: none; }

.rail-list {
  width: 68px;
  margin-top: 16px;
  padding-top: 16px;
  border-top: 1px solid #45499a;
  display: flex;
  flex-direction: column;
  align-items: center;
  gap: 6px;
}

.rail-item {
  width: 80px;
  height: 80px;
  padding-top: 13px;
  display: flex;
  flex-direction: column;
  align-items: center;
  gap: 1px;
  border-radius: 6px;
  color: #a0a5b3;
  font-size: 18px;
  line-height: 26px;
}

.rail-item svg { height: 30px; }
.rail-item.active { background: #6c52f7; color: #c4b9fc; }
.rail-menu { margin-top: auto; }

/* top bar */
.workspace {
  flex: 1;
  min-width: 0;
  display: flex;
  flex-direction: column;
}

.topbar {
  height: 107px;
  flex: none;
  display: flex;
  align-items: flex-start;
  padding-right: 28px;
  background: radial-gradient(ellipse 200px 12px at 48% 0, #f1f1f1, #fff);
}

.tools { display: flex; padding: 11px 0 0 17px; }

.tool {
  width: 84px;
  display: flex;
  flex-direction: column;
  align-items: center;
  gap: 7px;
  font-size: 21px;
  line-height: 30px;
  white-space: nowrap;
}

.tool.wide { width: 104px; }

.tool-box {
  width: 54px;
  height: 54px;
  display: grid;
  place-items: center;
  border: 1px solid #ddd;
  border-radius: 6px;
}

.dark { color: #222; }

.search {
  width: 480px;
  height: 54px;
  margin: 26px 0 0 auto;
  padding: 4px 22px 0 15px;
  display: flex;
  align-items: center;
  gap: 14px;
  border: 2px solid #999;
  border-radius: 6px;
}

.search input {
  flex: 1;
  min-width: 0;
  padding: 0 0 6px;
  border: 0;
  outline: 0;
  color: #222;
  font: inherit;
  font-size: 24px;
}

.help { margin: 37px 44px 0 50px; }

.notice {
  width: 51px;
  height: 51px;
  margin: 28px 40px 0 0;
  display: grid;
  place-items: center;
  border: 4px solid #4caf50;
  border-radius: 50%;
}

.window-controls { display: flex; margin-top: 41px; }
.window-controls button { width: 45px; display: grid; place-items: center; }

/* evidence tree */
.content {
  flex: 1;
  min-height: 0;
  display: flex;
}

.tree { width: 365px; flex: none; padding-top: 2px; }

.node {
  height: 42px;
  display: flex;
  align-items: center;
  padding-right: 31px;
  font-size: 19px;
  line-height: 28px;
  white-space: nowrap;
}

.node i { display: grid; place-items: center; flex: none; }
.tw { width: 20px; }
.ic { width: 34px; margin: 0 5px 0 6px; }
.node span { flex: 1; }
.node b { font-weight: 400; }
.node span .full { font-family: "Noto Sans CJK SC", sans-serif; }
.l0 { padding-left: 9px; }
.l1 { padding-left: 18px; }
.l2 { padding-left: 34px; }
.selected { background: #6c52f7; box-shadow: 0 -2px #6c52f7, 0 1px #6c52f7; color: #fff; }
.framed { border: 2px solid #fff; border-radius: 3px; }

/* main area */
.main {
  flex: 1;
  min-width: 0;
  display: flex;
  flex-direction: column;
  padding: 12px 11px 17px 16px;
  background: #f7f7f7;
}

.crumbs {
  height: 54px;
  flex: none;
  margin-bottom: 12px;
  padding-left: 2px;
  display: flex;
  align-items: center;
  background: #fff;
  font-size: 21px;
  line-height: 30px;
}

.crumbs a { display: flex; align-items: center; gap: 5px; }

.branch {
  width: 73px;
  height: 48px;
  margin-right: 9px;
  display: grid;
  place-items: center;
  border-radius: 5px;
  background: #dfdfdf;
}

.sep { margin: 0 11px; fill: none; stroke: #333; stroke-width: 2; }
.lift { margin-bottom: 8px; }
.current { color: #6c52f7; }
.current span { border-bottom: 2px solid #555; }

.grid {
  flex: none;
  position: relative;
  border: 2px solid #bcc3c6;
  background: linear-gradient(#f4f6f5 46px, #bcc3c6 46px, #bcc3c6 48px, #fff 48px);
}

table {
  width: calc(100% - 18px);
  table-layout: fixed;
  border-collapse: separate;
  border-spacing: 0;
}

.c-no { width: 128px; }
.c-title { width: 420px; }
.c-url { width: 954px; }
.c-time { width: 285px; }

th {
  position: relative;
  height: 48px;
  padding: 0 0 2px 10px;
  color: #6b6f70;
  font-size: 18px;
  font-weight: 400;
}

th:first-child { padding-left: 17px; }

th:not(:last-child)::after {
  content: "";
  position: absolute;
  top: 12px;
  right: 10px;
  width: 1px;
  height: 24px;
  background: #d5d8d9;
}

.head { display: flex; align-items: center; gap: 8px; }

input[type="checkbox"] {
  appearance: none;
  flex: none;
  width: 22px;
  height: 22px;
  margin: 0;
  border: 2px solid #707070;
  border-radius: 2px;
  background: #fff;
}

th input[type="checkbox"] {
  border: 1px solid #aaa;
  border-radius: 3px;
  background: linear-gradient(#eee, #d8d8d8);
}

td {
  height: 54px;
  padding: 0 0 0 18px;
  border-bottom: 2px solid #d8dbdd;
  background: #fff;
  color: #1c1c1c;
  line-height: 28px;
  white-space: nowrap;
}

tbody tr:nth-child(even) td { background: #fbfcfe; }
tbody tr.hover td { background: #fbfbfb; }
.partial td { height: 44px; padding-bottom: 10px; }
tr.before td { border-bottom-color: #7370f8; }
.picked td { box-shadow: inset 0 -2px #7370f8; }
td:first-child { padding-left: 33px; }

td.focus { padding: 0; vertical-align: top; }
.focus div {
  height: 50px;
  padding: 9px 15px;
  border: 3px solid #0a92e8;
}

.num { display: flex; align-items: center; gap: 15px; }
.num span { width: 20px; margin-left: -6px; overflow: hidden; }

.scroll-h {
  width: 62%;
  height: 12px;
  margin-top: 17px;
  border-radius: 6px;
  background: #ccc;
}

.scroll-v {
  position: absolute;
  top: 225px;
  right: 3px;
  width: 12px;
  height: 88px;
  border-radius: 6px;
  background: #ddd;
}

/* detail panel */
.detail {
  flex: 1;
  margin-top: 27px;
  border: 2px solid #d6d6d6;
  background: #fff;
}

.detail-head {
  height: 59px;
  padding: 0 15px 0 22px;
  display: flex;
  align-items: center;
  border-bottom: 2px solid #d6d6d6;
  color: #888;
}

.detail-head h2 { flex: 1; margin: 0; color: #222; font-size: 21px; line-height: 30px; }
.detail-head button { margin-left: 26px; }
.detail-head button:last-child { margin-left: 30px; }

dl { margin: 0; padding: 9px 22px; }
dl div { display: flex; align-items: center; gap: 5px; height: 37px; }
dt { color: #444; font-size: 19px; line-height: 28px; }
dd { margin: 0; font-size: 22px; line-height: 30px; }
dd a { color: #6c52f7; }

/* taskbar */
.taskbar {
  position: relative;
  height: 72px;
  flex: none;
  display: grid;
  grid-template-columns: 1fr auto 1fr;
  align-items: center;
  padding-bottom: 2px;
  border-top: 2px solid #44464b;
  background: linear-gradient(90deg, #22242c, #1f2433 36%, #27221f 53%, #242223 60%, #1f232d 66%, #1e232d);
  color: #fff;
}

.apps { grid-column: 2; display: flex; gap: 6px; align-items: center; }

.app-btn {
  position: relative;
  width: 60px;
  height: 60px;
  display: grid;
  place-items: center;
  border-radius: 6px;
}

.app-btn.current { border: 1px solid #3b3b42; background: #2c2c33; }

.running::after,
.app-btn.current::after {
  content: "";
  position: absolute;
  bottom: 0;
  left: 50%;
  width: 10px;
  height: 5px;
  margin-left: -5px;
  border-radius: 3px;
  background: #9b9b9b;
}

.app-btn.current::after { width: 24px; margin-left: -12px; background: #76d7dc; }

.task-search {
  width: 330px;
  height: 48px;
  padding-left: 17px;
  display: flex;
  align-items: center;
  gap: 14px;
  border: 1px solid #5c5b60;
  border-radius: 24px;
  background: linear-gradient(90deg, #3f424e, #454244);
  color: #d5d5d8;
  font-size: 21px;
}

.tray {
  grid-column: 3;
  display: flex;
  align-items: center;
  justify-content: flex-end;
  padding-right: 30px;
}

.tray button { width: 48px; display: grid; place-items: center; font-size: 22px; }
.tray .sys { width: 36px; }
.tray .ime { margin-right: 6px; }

.clock {
  width: 102px;
  display: flex;
  flex-direction: column;
  text-align: right;
  font-size: 17px;
  line-height: 24px;
}

.badge {
  width: 24px;
  height: 24px;
  margin-left: 11px;
  border-radius: 50%;
  background: #70d3da;
  color: #111;
  font-size: 17px;
  line-height: 24px;
  text-align: center;
}

.watermark {
  position: absolute;
  right: 16px;
  bottom: 7px;
  color: #a5a8ae;
  font-size: 15px;
  line-height: 22px;
  text-shadow: 1px 1px 1px #000;
}
```
